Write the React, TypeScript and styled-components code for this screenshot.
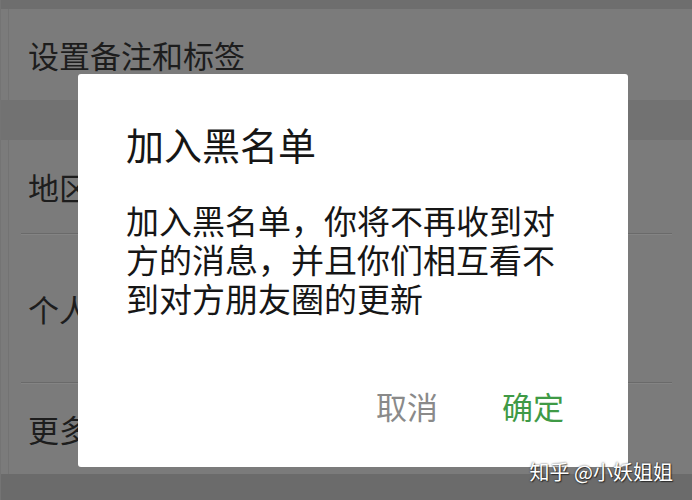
import React from 'react';
import styled, { createGlobalStyle } from 'styled-components';

const GlobalStyle = createGlobalStyle`
  html, body {
    margin: 0;
    padding: 0;
    background: #6c6c6c;
  }
  * { box-sizing: border-box; }
`;

const FONT = `"Noto Sans CJK SC", "Noto Sans", sans-serif`;

// ─── Background settings page (dimmed) ─────────────────────────────────────

const Screen = styled.div`
  position: relative;
  width: 692px;
  height: 500px;
  overflow: hidden;
  background: #7b7b7b;
  font-family: ${FONT};
  display: flex;
  flex-direction: column;
  border-left: 1px solid #747474;
  box-shadow: inset 7px 0 0 #7b7b7b, inset 8px 0 0 #737373;
`;

const TopStrip = styled.div`
  height: 9px;
  background: #6e6e6e;
  flex-shrink: 0;
`;

const Row = styled.div<{ h: number }>`
  height: ${p => p.h}px;
  flex-shrink: 0;
  display: flex;
  align-items: center;
  padding-left: 27px;
  font-size: 31px;
  color: #1d1d1d;
`;

const Divider = styled.div`
  height: 1px;
  margin: 0 20px;
  background: #6a6a6a;
  box-shadow: 0 1px 0 #848484;
  flex-shrink: 0;
`;

const Band = styled.div<{ h: number }>`
  height: ${p => p.h}px;
  background: #727272;
  flex-shrink: 0;
`;

const BottomBand = styled.div`
  flex: 1;
  background: #6b6b6b;
`;

// ─── Dialog ────────────────────────────────────────────────────────────────

const Dialog = styled.div`
  position: absolute;
  left: 77px;
  top: 74px;
  width: 550px;
  height: 393px;
  background: #ffffff;
  border-radius: 3px;
  padding: 46px 48px 41px 48px;
  display: flex;
  flex-direction: column;
`;

const Title = styled.div`
  font-size: 38px;
  line-height: 48px;
  color: #161616;
`;

const Body = styled.div`
  margin-top: 33px;
  font-size: 33px;
  line-height: 39px;
  color: #161616;
  width: 440px;
`;

const Actions = styled.div`
  margin-top: auto;
  display: flex;
  justify-content: flex-end;
  gap: 32px;
`;

const ActionButton = styled.button<{ primary?: boolean }>`
  border: none;
  background: transparent;
  padding: 0 16px;
  font-family: ${FONT};
  font-size: 31px;
  line-height: 40px;
  color: ${p => (p.primary ? '#3f9a46' : '#8a8a8a')};
  cursor: pointer;
`;

const Watermark = styled.div`
  position: absolute;
  right: 19px;
  top: 459px;
  font-family: ${FONT};
  font-size: 20px;
  line-height: 26px;
  color: #ffffff;
  text-shadow: 0 0 2px rgba(0, 0, 0, 0.7), 1px 1px 1px rgba(0, 0, 0, 0.5);
  white-space: nowrap;
`;

const App: React.FC = () => {
  return (
    <>
      <GlobalStyle />
      <Screen>
        <TopStrip />
        <Row h={91}>设置备注和标签</Row>
        <Band h={40} />
        <Row h={93}>地区</Row>
        <Divider />
        <Row h={148}>个人</Row>
        <Divider />
        <Row h={91}>更多</Row>
        <BottomBand />

        <Dialog>
          <Title>加入黑名单</Title>
          <Body>加入黑名单，你将不再收到对方的消息，并且你们相互看不到对方朋友圈的更新</Body>
          <Actions>
            <ActionButton>取消</ActionButton>
            <ActionButton primary>确定</ActionButton>
          </Actions>
        </Dialog>

        <Watermark>知乎 @小妖姐姐</Watermark>
      </Screen>
    </>
  );
};

export default App;
